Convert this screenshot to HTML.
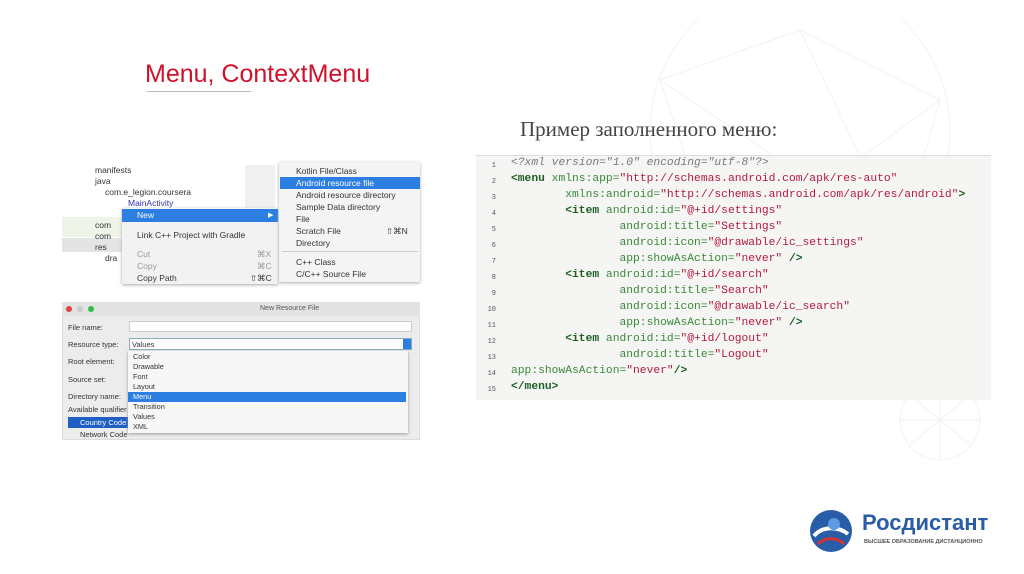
<!DOCTYPE html>
<html><head><meta charset="utf-8"><style>
*{margin:0;padding:0;box-sizing:border-box}
body{width:1024px;height:574px;background:#fff;position:relative;overflow:hidden;font-family:"Liberation Sans",sans-serif}
.a{position:absolute;white-space:nowrap}
.code{position:absolute;left:476px;top:155px;width:515px;height:245px;background:#f5f5f4;border-top:1px solid #ddd;font-family:"Liberation Mono",monospace;font-size:11.3px}
.ln{position:absolute;left:0;width:20px;text-align:right;font-size:7px;color:#555}
.cl{position:absolute;left:35px;color:#3a8a3a;white-space:pre}
.t{color:#1d5f22;font-weight:bold}
.s{color:#b31b3c}
.c{color:#7a7a7a;font-style:italic}
.ide{font-size:8.5px;color:#333}
</style></head><body>
<svg class="a" style="left:600px;top:20px" width="420" height="450" viewBox="0 0 420 450" fill="none" stroke="#f2f2f2" stroke-width="1">
<circle cx="200" cy="110" r="150"/><path d="M60 60 L200 10 L340 80 L300 220 L120 240 Z M200 10 L300 220 M60 60 L300 220 M120 240 L340 80"/>
<circle cx="340" cy="400" r="40"/><path d="M300 400 L380 400 M340 360 L340 440 M310 375 L370 425 M310 425 L370 375"/>
</svg>
<div class="a" style="left:145px;top:60px;font-size:25px;color:#d0112b">Menu, ContextMenu</div>
<div class="a" style="left:147px;top:91px;width:104px;height:1px;background:#bbb"></div>
<div class="a" style="left:520px;top:117px;font-family:'Liberation Serif',serif;font-size:21px;color:#444">Пример заполненного меню:</div>

<div class="a" style="left:62px;top:160px;width:358px;height:122px;background:#fff"></div>
<div class="a" style="left:62px;top:238px;width:60px;height:14px;background:#e4e4e4"></div>
<div class="a" style="left:62px;top:217px;width:60px;height:20px;background:#eef5e8"></div>
<div class="a" style="left:245px;top:165px;width:30px;height:115px;background:#f0f0f0"></div>
<div class="a ide" style="left:95px;top:165px">manifests</div>
<div class="a ide" style="left:95px;top:176px">java</div>
<div class="a ide" style="left:105px;top:187px">com.e_legion.coursera</div>
<div class="a ide" style="left:128px;top:198px;color:#33a">MainActivity</div>
<div class="a ide" style="left:95px;top:220px">com</div>
<div class="a ide" style="left:95px;top:231px">com</div>
<div class="a ide" style="left:95px;top:242px">res</div>
<div class="a ide" style="left:105px;top:253px">dra</div>
<div class="a" style="left:122px;top:208px;width:156px;height:76px;background:#f2f2f2;box-shadow:0 1px 3px #aaa"></div>
<div class="a" style="left:122px;top:209px;width:156px;height:13px;background:#2c7ee0"></div>
<div class="a ide" style="left:137px;top:210px;color:#fff">New</div>
<div class="a" style="left:268px;top:211px;font-size:7px;color:#fff">▶</div>
<div class="a ide" style="left:137px;top:230px">Link C++ Project with Gradle</div>
<div class="a ide" style="left:137px;top:249px;color:#999">Cut</div><div class="a ide" style="left:257px;top:249px;color:#999">⌘X</div>
<div class="a ide" style="left:137px;top:261px;color:#999">Copy</div><div class="a ide" style="left:257px;top:261px;color:#999">⌘C</div>
<div class="a ide" style="left:137px;top:273px">Copy Path</div><div class="a ide" style="left:250px;top:273px">⇧⌘C</div>
<div class="a" style="left:279px;top:162px;width:141px;height:120px;background:#f4f4f4;box-shadow:0 1px 3px #aaa"></div>
<div class="a" style="left:280px;top:177px;width:140px;height:12px;background:#2c7ee0"></div>
<div class="a ide" style="left:296px;top:166px">Kotlin File/Class</div>
<div class="a ide" style="left:296px;top:178px;color:#fff">Android resource file</div>
<div class="a ide" style="left:296px;top:190px">Android resource directory</div>
<div class="a ide" style="left:296px;top:202px">Sample Data directory</div>
<div class="a ide" style="left:296px;top:214px">File</div>
<div class="a ide" style="left:296px;top:226px">Scratch File</div><div class="a ide" style="left:386px;top:226px">⇧⌘N</div>
<div class="a ide" style="left:296px;top:238px">Directory</div>
<div class="a" style="left:282px;top:251px;width:136px;height:1px;background:#ccc"></div>
<div class="a ide" style="left:296px;top:257px">C++ Class</div>
<div class="a ide" style="left:296px;top:269px">C/C++ Source File</div>

<div class="a" style="left:62px;top:302px;width:358px;height:138px;background:#ececec;border:1px solid #ddd"></div>
<div class="a" style="left:62px;top:302px;width:358px;height:14px;background:#e2e2e2"></div>
<div class="a" style="left:66px;top:306px;width:6px;height:6px;border-radius:50%;background:#e0443e"></div>
<div class="a" style="left:77px;top:306px;width:6px;height:6px;border-radius:50%;background:#ccc"></div>
<div class="a" style="left:88px;top:306px;width:6px;height:6px;border-radius:50%;background:#2fbe46"></div>
<div class="a ide" style="left:260px;top:305px;font-size:7px;color:#555">New Resource File</div>
<div class="a ide" style="left:68px;top:323px;font-size:7.5px">File name:</div>
<div class="a" style="left:129px;top:321px;width:283px;height:11px;background:#fff;border:1px solid #ccc"></div>
<div class="a ide" style="left:68px;top:340px;font-size:7.5px">Resource type:</div>
<div class="a" style="left:129px;top:338px;width:283px;height:12px;background:#fff;border:1px solid #8ab"></div>
<div class="a ide" style="left:132px;top:340px;font-size:7.5px">Values</div>
<div class="a" style="left:403px;top:339px;width:8px;height:10px;background:#2c7ee0"></div>
<div class="a ide" style="left:68px;top:357px;font-size:7.5px">Root element:</div>
<div class="a ide" style="left:68px;top:375px;font-size:7.5px">Source set:</div>
<div class="a ide" style="left:68px;top:392px;font-size:7.5px">Directory name:</div>
<div class="a ide" style="left:68px;top:405px;font-size:7.5px">Available qualifier</div>
<div class="a" style="left:68px;top:417px;width:60px;height:11px;background:#1f5fc4"></div>
<div class="a ide" style="left:80px;top:418px;color:#fff;font-size:7.5px">Country Code</div>
<div class="a ide" style="left:80px;top:430px;font-size:7.5px">Network Code</div>
<div class="a" style="left:128px;top:351px;width:280px;height:82px;background:#f7f7f7;box-shadow:0 1px 3px #999"></div>
<div class="a" style="left:128px;top:392px;width:278px;height:10px;background:#2c7ee0"></div>
<div class="a ide" style="left:133px;top:352px;font-size:7.3px;line-height:10px">Color<br>Drawable<br>Font<br>Layout<br><span style="color:#fff">Menu</span><br>Transition<br>Values<br>XML</div>

<div class="code">
<div class="ln" style="top:6px">1</div><div class="cl c" style="top:1px">&lt;?xml version="1.0" encoding="utf-8"?&gt;</div>
<div class="ln" style="top:22px">2</div><div class="cl" style="top:17px"><span class="t">&lt;menu</span> xmlns:app=<span class="s">"http://schemas.android.com/apk/res-auto"</span></div>
<div class="ln" style="top:38px">3</div><div class="cl" style="top:33px">        xmlns:android=<span class="s">"http://schemas.android.com/apk/res/android"</span><span class="t">&gt;</span></div>
<div class="ln" style="top:54px">4</div><div class="cl" style="top:49px">        <span class="t">&lt;item</span> android:id=<span class="s">"@+id/settings"</span></div>
<div class="ln" style="top:70px">5</div><div class="cl" style="top:65px">                android:title=<span class="s">"Settings"</span></div>
<div class="ln" style="top:86px">6</div><div class="cl" style="top:81px">                android:icon=<span class="s">"@drawable/ic_settings"</span></div>
<div class="ln" style="top:102px">7</div><div class="cl" style="top:97px">                app:showAsAction=<span class="s">"never"</span> <span class="t">/&gt;</span></div>
<div class="ln" style="top:118px">8</div><div class="cl" style="top:113px">        <span class="t">&lt;item</span> android:id=<span class="s">"@+id/search"</span></div>
<div class="ln" style="top:134px">9</div><div class="cl" style="top:129px">                android:title=<span class="s">"Search"</span></div>
<div class="ln" style="top:150px">10</div><div class="cl" style="top:145px">                android:icon=<span class="s">"@drawable/ic_search"</span></div>
<div class="ln" style="top:166px">11</div><div class="cl" style="top:161px">                app:showAsAction=<span class="s">"never"</span> <span class="t">/&gt;</span></div>
<div class="ln" style="top:182px">12</div><div class="cl" style="top:177px">        <span class="t">&lt;item</span> android:id=<span class="s">"@+id/logout"</span></div>
<div class="ln" style="top:198px">13</div><div class="cl" style="top:193px">                android:title=<span class="s">"Logout"</span></div>
<div class="ln" style="top:214px">14</div><div class="cl" style="top:209px">app:showAsAction=<span class="s">"never"</span><span class="t">/&gt;</span></div>
<div class="ln" style="top:230px">15</div><div class="cl" style="top:225px"><span class="t">&lt;/menu&gt;</span></div>
</div>

<svg class="a" style="left:808px;top:508px" width="46" height="46" viewBox="0 0 46 46">
<circle cx="23" cy="23" r="21" fill="#2a5da8"/>
<path d="M6 28 C14 18 30 18 40 26" stroke="#fff" stroke-width="4" fill="none"/>
<path d="M10 36 C18 28 30 30 36 36" stroke="#d8322f" stroke-width="3" fill="none"/>
<circle cx="26" cy="16" r="6" fill="#5b9be0"/>
</svg>
<div class="a" style="left:862px;top:510px;font-size:22px;font-weight:bold;color:#2a5da8">Росдистант</div>
<div class="a" style="left:864px;top:539px;font-size:5.5px;color:#555;font-weight:bold">ВЫСШЕЕ ОБРАЗОВАНИЕ ДИСТАНЦИОННО</div>
</body></html>
